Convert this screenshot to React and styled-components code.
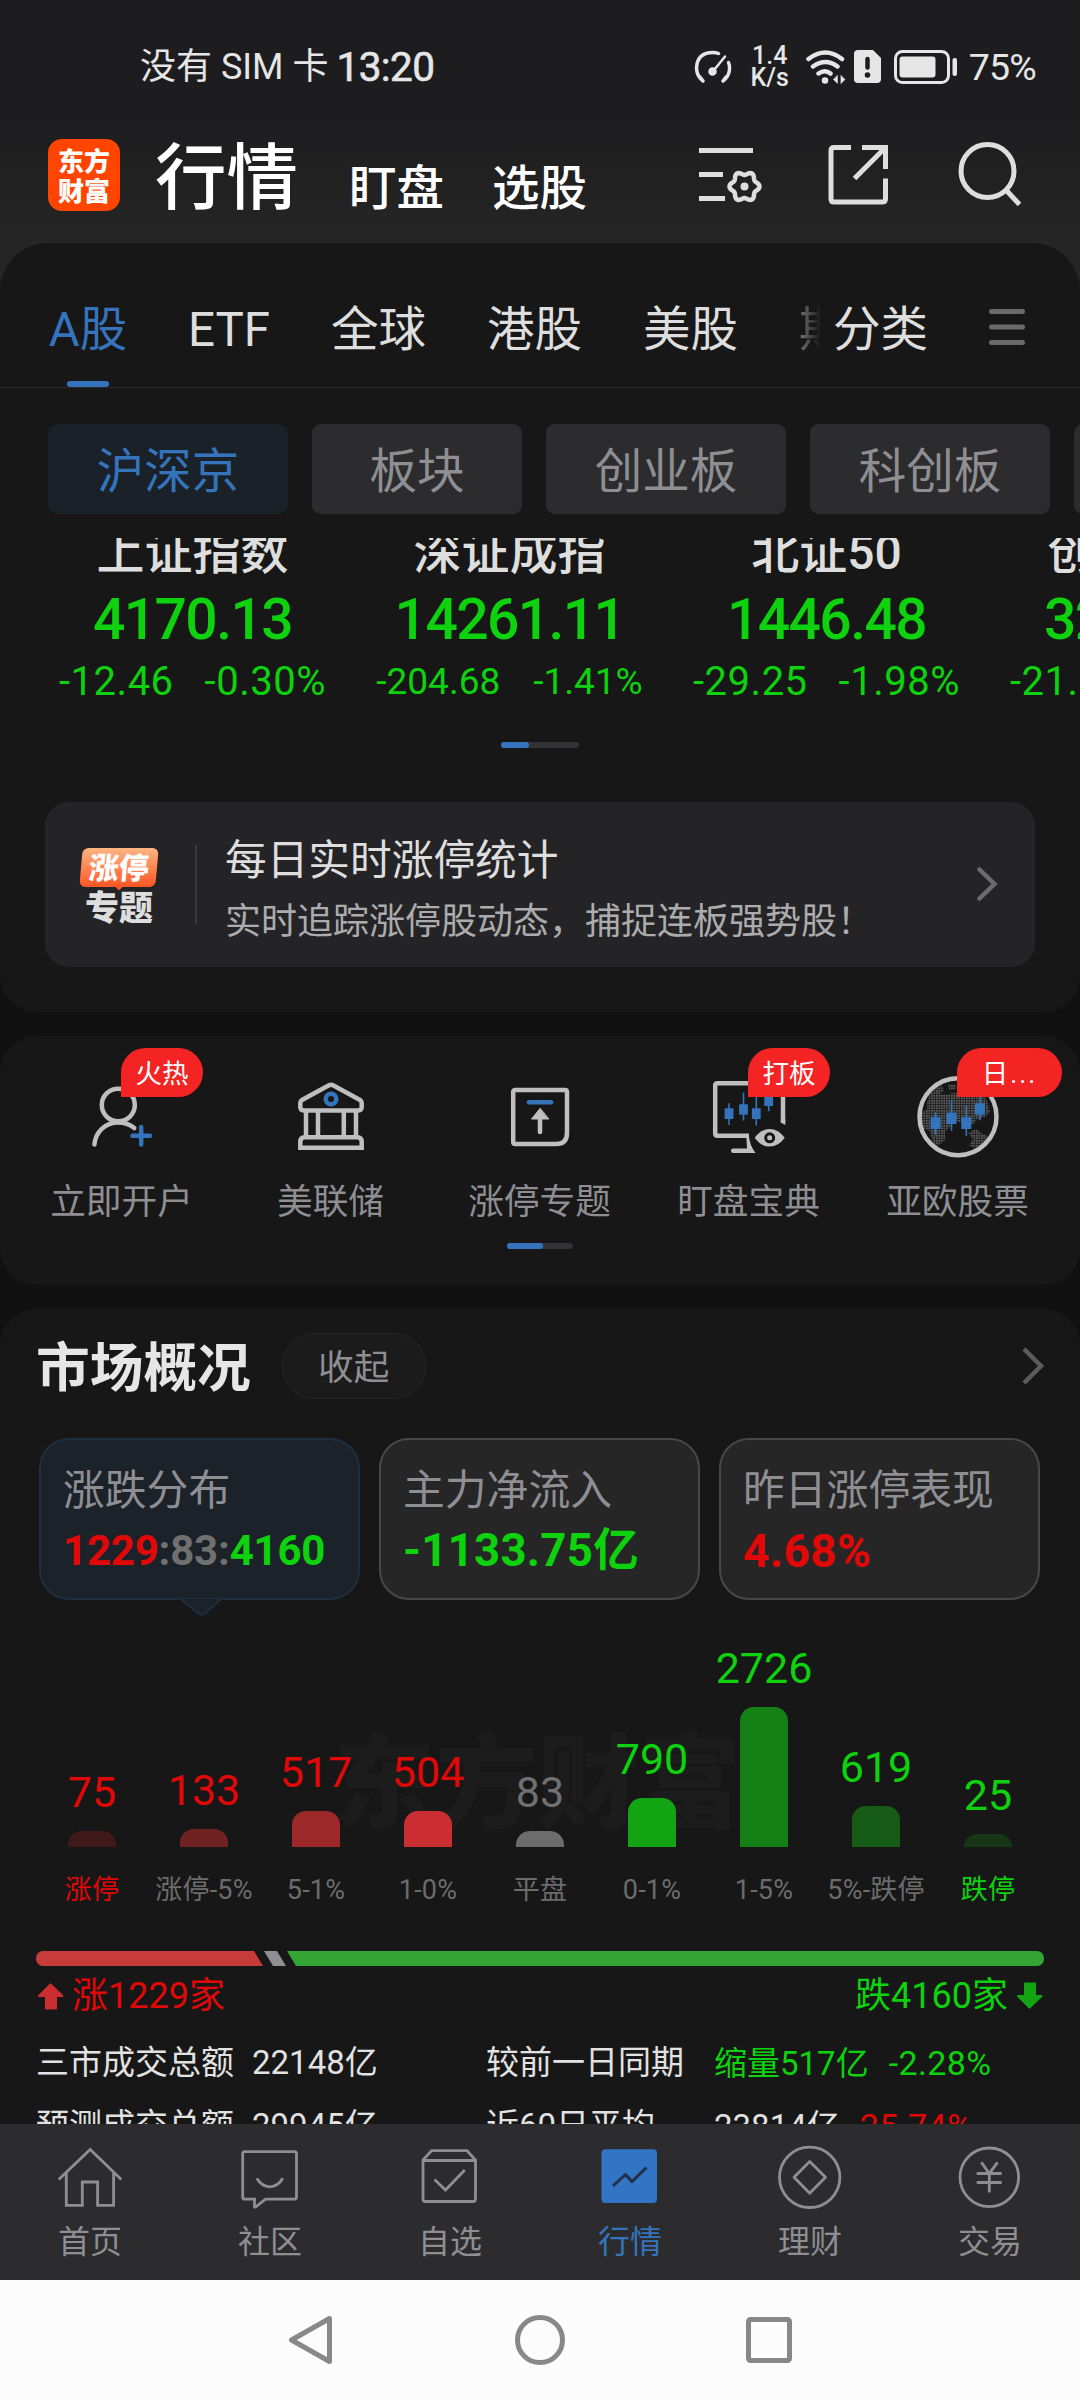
// 行情 home screen
import React from "react";
import styled, { createGlobalStyle } from "styled-components";

const BLUE = "#3574bd";
const RED = "#e20808";
const GREEN = "#0dd20d";
const GREY = "#8e8e93";
const TEXT = "#dedede";

const GlobalStyle = createGlobalStyle`
  * {
    box-sizing: border-box;
  }
  body {
    margin: 0;
    background: #111;
    font-family: Roboto, "Noto Sans CJK SC", sans-serif;
    white-space: nowrap;
  }
  svg {
    display: block;
    flex: none;
  }
`;

const Screen = styled.div`
  display: flex;
  flex-direction: column;
  width: 1080px;
  height: 2400px;
  overflow: hidden;
  color: ${TEXT};
`;

const Top = styled.div`
  height: 291px;
  margin-bottom: -48px;
  background: linear-gradient(#1d1d1f 0, #1d1d1f 110px, #252525 240px);
  flex: none;
`;

/* status bar */
const StatusBar = styled.div`
  display: flex;
  align-items: center;
  height: 134px;
  padding: 0 44px 0 140px;
  color: #e6e6e6;
  font-size: 36px;
  line-height: 40px;
`;

const Clock = styled.span`
  margin-left: 8px;
  font-size: 40.5px;
  letter-spacing: -0.6px;
  -webkit-text-stroke: 0.6px currentColor;
`;

const StatusIcons = styled.div`
  display: flex;
  align-items: center;
  margin-left: auto;
`;

const NetSpeed = styled.div`
  width: 40px;
  margin: 0 16px 0 18px;
  font-size: 25px;
  font-weight: 500;
  line-height: 22px;
  text-align: center;
`;

const Percent = styled.span`
  margin-left: 11px;
  font-size: 37.5px;
  letter-spacing: -0.8px;
`;

/* app header */
const Header = styled.header`
  display: flex;
  height: 109px;
  padding: 5px 58px 0 48px;
  color: #fff;
`;

const Logo = styled.div`
  width: 72px;
  height: 72px;
  padding: 6px 0;
  border-radius: 14px;
  background: #ff4500;
  font-family: "Noto Sans CJK SC", sans-serif;
  font-size: 26px;
  font-weight: 900;
  line-height: 30px;
  text-align: center;
`;

const Heading = styled.h1`
  margin: 4px 0 0 35px;
  font-size: 71.5px;
  font-weight: 500;
  line-height: 72px;
`;

const HeaderLink = styled.span`
  margin: 24px 0 0 ${p => p.$gap}px;
  font-size: 47.5px;
  font-weight: 500;
  line-height: 52px;
`;

const HeaderIcons = styled.div`
  display: flex;
  gap: 66px;
  margin: 3px 0 0 auto;
`;

/* panels */
const Panel = styled.section`
  flex: none;
  height: ${p => p.$height}px;
  margin-bottom: ${p => p.$gap || 0}px;
  border-radius: ${p => p.$radius || "36px"};
  background: #171717;
  overflow: hidden;
`;

const Tabs = styled.nav`
  display: flex;
  height: 145px;
  padding: 60px 54px 0 49px;
  border-bottom: 1px solid #2a2a2a;
  font-size: 47.5px;
  line-height: 54px;
`;

const Tab = styled.div`
  display: flex;
  flex-direction: column;
  align-items: center;
  width: ${p => p.$width}px;
  margin-right: ${p => p.$gap}px;
  color: ${p => (p.$active ? BLUE : TEXT)};

  &::after {
    content: "";
    width: 42px;
    height: 6px;
    margin-top: 24px;
    border-radius: 3px;
    background: ${p => (p.$active ? BLUE : "transparent")};
  }
`;

const FadedTab = styled.div`
  width: 24px;
  height: 54px;
  margin-right: 12px;
  overflow: hidden;
  color: #777;
  mask-image: linear-gradient(90deg, #000, transparent);
`;

const Pills = styled.div`
  display: flex;
  gap: 24px;
  padding: 36px 0 24px 48px;
`;

const Pill = styled.div`
  flex: none;
  width: ${p => (p.$short ? 210 : 240)}px;
  height: 90px;
  border-radius: 9px;
  background: ${p => (p.$active ? "#1a2129" : "#2c2c2e")};
  color: ${p => (p.$active ? BLUE : GREY)};
  font-size: 47.5px;
  line-height: 97px;
  text-align: center;
`;

/* index quotes, scrolled a little under the pills */
const Quotes = styled.div`
  display: flex;
  height: 172px;
  padding-left: 34px;
  overflow: hidden;
`;

const Quote = styled.div`
  flex: none;
  width: 317px;
  margin-top: -10px;
  text-align: center;
  color: ${GREEN};
`;

const QuoteName = styled.div`
  color: ${TEXT};
  font-size: 48px;
  font-weight: 500;
  line-height: 50px;
`;

const QuotePrice = styled.div`
  margin-top: 12px;
  font-size: 57px;
  font-weight: 500;
  letter-spacing: -1.6px;
  line-height: 60px;
`;

const QuoteChange = styled.div`
  display: flex;
  justify-content: center;
  gap: ${p => (p.$small ? 33 : 31)}px;
  margin-top: 12px;
  font-size: ${p => (p.$small ? 37 : 40)}px;
  letter-spacing: ${p => (p.$small ? 0 : 0.5)}px;
  line-height: 40px;
`;

const Pager = styled.div`
  width: ${p => p.$width}px;
  height: 6px;
  margin: ${p => p.$top}px auto 0;
  border-radius: 3px;
  background: #333335;

  &::before {
    content: "";
    display: block;
    width: ${p => p.$thumb}px;
    height: 6px;
    border-radius: 3px;
    background: ${BLUE};
  }
`;

const Banner = styled.div`
  display: flex;
  align-items: center;
  height: 165px;
  margin: 54px 45px 0;
  padding: 0 37px 0 34px;
  border-radius: 24px;
  background: #242426;
`;

const BannerIcon = styled.div`
  width: 80px;
  font-family: "Noto Sans CJK SC", sans-serif;
  font-weight: 900;
  text-align: center;
`;

const BannerTag = styled.div`
  width: 76px;
  height: 39px;
  margin: 0 auto;
  border-radius: 6px;
  background: linear-gradient(#ffb583, #ff5524);
  color: #fff;
  font-size: 30px;
  line-height: 37px;
  transform: skewX(-5deg);
`;

/* small pointer under the orange tag */
const BannerTip = styled.div`
  width: 8px;
  height: 4px;
  margin: 0 auto;
  background: #ff5524;
  clip-path: polygon(0 0, 100% 0, 50% 100%);
`;

const BannerWord = styled.div`
  margin-top: -1px;
  font-size: 34px;
  line-height: 32px;
`;

const Divider = styled.div`
  width: 2px;
  height: 79px;
  margin: 0 28px 0 36px;
  background: #39393b;
`;

const BannerText = styled.div`
  flex: 1;
  padding-top: 16px;
  font-size: 41.7px;
  line-height: 58px;
`;

const BannerSub = styled.div`
  color: #acacae;
  font-size: 36px;
  line-height: 64px;
`;

/* shortcuts */
const Shortcuts = styled.div`
  display: grid;
  grid-template-columns: repeat(5, 209px);
  padding: 39px 0 0 17px;
`;

const Shortcut = styled.div`
  position: relative;
  display: flex;
  flex-direction: column;
  align-items: center;
  color: ${GREY};
  font-size: 35.7px;
  line-height: 40px;

  svg {
    margin-bottom: 23px;
  }
`;

const Badge = styled.div`
  position: absolute;
  top: -27px;
  left: 104px;
  width: ${p => (p.$wide ? 105 : 82)}px;
  height: 49px;
  border-radius: 25px 25px 25px 0;
  background: #f42424;
  color: #fff;
  font-size: 26.5px;
  line-height: 51px;
  text-align: center;
  letter-spacing: ${p => (p.$wide ? 2 : 0)}px;
`;

/* market overview */
const OverviewHead = styled.div`
  display: flex;
  align-items: center;
  height: 66px;
  margin: 24px 35px 39px 36px;
`;

const OverviewTitle = styled.h2`
  margin: 0 31px 0 0;
  color: #e6e6e6;
  font-size: 53.7px;
  font-weight: 700;
  line-height: 72px;
  padding-top: 5px;
`;

const Collapse = styled.div`
  width: 144px;
  height: 66px;
  margin-right: auto;
  border: 1px solid #252525;
  border-radius: 32px;
  background: #1b1b1b;
  color: ${GREY};
  font-size: 35.7px;
  line-height: 69px;
  text-align: center;
`;

const Cards = styled.div`
  display: grid;
  grid-template-columns: repeat(3, 321px);
  gap: 19px;
  padding-left: 39px;
`;

const Card = styled.div`
  position: relative;
  height: 162px;
  padding: 26px 0 0 22px;
  border: 2px solid ${p => (p.$active ? "#1f2f42" : "#484848")};
  border-radius: 30px;
  background: ${p => (p.$active ? "#1b222a" : "#262626")};
  color: ${GREY};
  font-size: 41.8px;
  line-height: 50px;

  svg {
    position: absolute;
    left: 139px;
    top: 158px;
  }
`;

const CardValue = styled.div`
  margin-top: 8px;
  color: ${p => p.color};
  font-size: ${p => p.$size}px;
  font-weight: 700;
  letter-spacing: ${p => p.$spacing}px;
  line-height: 54px;
`;

const Colored = styled.span`
  color: ${p => p.color};
`;

const Chart = styled.div`
  position: relative;
  display: grid;
  grid-template-columns: repeat(9, 112px);
  align-items: end;
  height: 310px;
  padding-left: 36px;
`;

const Watermark = styled.div`
  position: absolute;
  left: 333px;
  top: 125px;
  color: #1c1c1c;
  font-size: 102px;
  font-weight: 900;
  line-height: 120px;
`;

const Column = styled.div`
  position: relative;
  display: flex;
  flex-direction: column;
  align-items: center;
`;

const Count = styled.div`
  color: ${p => p.color};
  font-size: 43px;
  line-height: 44px;
`;

const Bar = styled.div`
  width: 48px;
  margin: 17px 0 23px;
  border-radius: 14px 14px 0 0;
  background: ${p => p.color};
`;

const Bucket = styled.div`
  color: ${p => p.color};
  font-size: 27px;
  letter-spacing: 0.2px;
  line-height: 40px;
`;

const Ratio = styled.div`
  display: flex;
  gap: 1px;
  height: 15px;
  margin: 41px 36px 0;
  border-radius: 7px;
  overflow: hidden;
`;

const RatioPart = styled.div`
  flex: ${p => (p.$width ? `none` : 1)};
  width: ${p => p.$width}px;
  background: ${p => p.color};
  clip-path: ${p =>
    p.$side === "left"
      ? "polygon(0 0, calc(100% - 9px) 0, 100% 100%, 0 100%)"
      : p.$side === "right"
      ? "polygon(0 0, 100% 0, 100% 100%, 9px 100%)"
      : "polygon(0 0, calc(100% - 9px) 0, 100% 100%, 9px 100%)"};
`;

const RatioLabels = styled.div`
  display: flex;
  justify-content: space-between;
  margin: 10px 37px 0;
  font-size: 36px;
  line-height: 40px;
`;

const RatioLabel = styled.div`
  display: flex;
  align-items: center;
  gap: 8px;
  color: ${p => p.color};
`;

const Totals = styled.div`
  display: grid;
  grid-template-columns: 216px 234px 228px 1fr;
  margin: 16px 0 0 36px;
  color: #e2e2e2;
  font-size: 33px;
  line-height: 62px;
`;

const Gap = styled.span`
  margin-left: 20px;
  font-size: 34px;
  letter-spacing: 0.4px;
`;

/* bottom bars */
const TabBar = styled.nav`
  flex: none;
  display: grid;
  grid-template-columns: repeat(6, 180px);
  height: 156px;
  padding-top: 21px;
  background: #2c2c2e;
`;

const TabItem = styled.div`
  display: flex;
  flex-direction: column;
  align-items: center;
  color: ${p => (p.$active ? BLUE : GREY)};
  font-size: 32px;
  line-height: 40px;

  svg {
    margin-bottom: 13px;
  }
`;

const SystemNav = styled.div`
  flex: none;
  display: flex;
  justify-content: center;
  align-items: center;
  gap: 179px;
  height: 120px;
  background: #fcfcfc;
`;

const Icon = ({ w, h = w, sw = 5, color = "currentColor", children, ...rest }) => (
  <svg
    width={w}
    height={h}
    viewBox={`0 0 ${w} ${h}`}
    fill="none"
    stroke={color}
    strokeWidth={sw}
    {...rest}
  >
    {children}
  </svg>
);

// six soft lobes around a centre
const gearPoints = (cx, cy) =>
  Array.from({ length: 72 }, (_, i) => {
    const a = (i / 72) * Math.PI * 2;
    const r = 13.3 + 1.7 * Math.cos(6 * a);
    return `${(cx + r * Math.cos(a)).toFixed(2)},${(cy + r * Math.sin(a)).toFixed(2)}`;
  }).join(" ");

// x, body top, body bottom, wick top, wick bottom
const Candles = ({ data, width }) =>
  data.map(([x, top, bottom, high, low]) => (
    <g key={x} fill={BLUE} stroke="none">
      <rect x={x - width / 2} y={top} width={width} height={bottom - top} />
      <rect x={x - 0.8} y={high} width="1.6" height={low - high} />
    </g>
  ));

const ICON_GREY = "#bfbfbf";

const AccountIcon = () => (
  <Icon w={84} sw={4.5} color={ICON_GREY} strokeLinecap="round">
    <ellipse cx="38.3" cy="30" rx="16.5" ry="16.3" />
    <path d="M14.4 69.5C15.5 57 25 47.5 38.3 47.5c6 0 11.5 2 16 5.5" />
    <path d="M52.5 60.7h17.4M61.2 52v17.4" stroke={BLUE} />
  </Icon>
);

const BankIcon = () => (
  <Icon w={84} sw={4.5} color={ICON_GREY}>
    <path d="M39.5 10.5q2.5-1.3 5 0L71 25q1.7 1 1.7 3v4q0 3.4-3.5 3.4H14.800q-3.5 0-3.5-3.4v-4q0-2 1.7-3z" />
    <path d="M17 36v26M29 36v26M54.8 36v26M67 36v26" />
    <path d="M11.3 72.8v-6q0-4.5 4.5-4.5h52.4q4.500 0 4.5 4.5v6z" />
    <circle cx="42" cy="24" r="5.3" stroke={BLUE} />
  </Icon>
);

const LimitUpIcon = () => (
  <Icon w={84} sw={4.5} color={ICON_GREY} strokeLinecap="round">
    <path d="M17.5 15h49.5q2 0 2 2v41q0 11-11 11H17.5q-2.3 0-2.3-2.3V17.3q0-2.3 2.3-2.3z" />
    <path d="M31 27.3h22" stroke={BLUE} />
    <path d="M42 37v20" />
    <path d="M42 33.500l-8.5 10.500h17z" fill={ICON_GREY} stroke={ICON_GREY} strokeWidth="1" />
  </Icon>
);

const MonitorIcon = () => (
  <Icon w={84} sw={4.5} color={ICON_GREY}>
    <path d="M76 47.5V10.5q0-2.3-2.3-2.3H10.5q-2.3 0-2.3 2.3v48q0 2.3 2.3 2.3h31.5" />
    <path
      d="M39.3 61h2.7q.5 9 6.5 17H26q-2 0-2-2.3t2-2.3h14z"
      fill={ICON_GREY}
      stroke="none"
    />
    <path d="M73.8 44v3.5l4.5 2.5v-6z" fill={ICON_GREY} stroke="none" />
    <Candles
      width={8.8}
      data={[
        [22, 33.3, 44, 28.3, 50],
        [36.5, 29.3, 39.7, 17.7, 45.7],
        [49.3, 33.3, 44, 20, 50.7],
        [61.7, 20, 31, 15, 36.3]
      ]}
    />
    <path
      d="M47.7 62.8Q54 54 62.7 54T77.7 62.8Q71.5 71.6 62.7 71.6T47.7 62.8z"
      fill={ICON_GREY}
      stroke="none"
    />
    <circle cx="62.7" cy="62.8" r="4" stroke="#171717" strokeWidth="3" />
  </Icon>
);

const GlobeIcon = () => (
  <Icon w={84} sw={4.5} color={ICON_GREY}>
    <defs>
      <pattern id="dots" width="2.5" height="2.5" patternUnits="userSpaceOnUse">
        <rect width="1.8" height="1.8" fill="#5c5c5c" stroke="none" />
      </pattern>
    </defs>
    <path
      d="M14 19l6-5 5-4 3 5-4 4 8 0 12-2 14 2 12 4 4 14-5 5-8 2-4 6-5-4-5 3-8-4-6 8-4 4v8l-7 6-5-3-3-12-9-3-1-14 7-5 0-6zM32 9l8 1 0 5-7 0zM52 58l8-4 5 4 8 4-7 8-8 3-5-3 4-6z"
      fill="url(#dots)"
      stroke="none"
    />
    <Candles
      width={10}
      data={[
        [19.6, 42.3, 54, 37.3, 59.7],
        [35.5, 37.7, 49, 25.3, 55.7],
        [50.3, 42.3, 54, 30.3, 61.3],
        [64, 28.3, 39.7, 22, 45.3]
      ]}
    />
    <circle cx="42" cy="41.7" r="38.5" />
  </Icon>
);

const quotes = [
  ["上证指数", "4170.13", "-12.46", "-0.30%"],
  ["深证成指", "14261.11", "-204.68", "-1.41%"],
  ["北证50", "1446.48", "-29.25", "-1.98%"],
  ["创业板指", "3287.20", "-21.96", "-0.66%"]
];

const shortcuts = [
  { label: "立即开户", icon: AccountIcon, badge: "火热" },
  { label: "美联储", icon: BankIcon },
  { label: "涨停专题", icon: LimitUpIcon },
  { label: "盯盘宝典", icon: MonitorIcon, badge: "打板" },
  { label: "亚欧股票", icon: GlobeIcon, badge: "日...", wide: true }
];

const DIM = "#6c6c6c";

const buckets = [
  { label: "涨停", count: 75, height: 16, bar: "#401a1b", color: RED, strong: true },
  { label: "涨停-5%", count: 133, height: 18, bar: "#702223", color: RED },
  { label: "5-1%", count: 517, height: 36, bar: "#9c2829", color: RED },
  { label: "1-0%", count: 504, height: 36, bar: "#ca2e30", color: RED },
  { label: "平盘", count: 83, height: 16, bar: DIM, color: "#707070" },
  { label: "0-1%", count: 790, height: 49, bar: "#13a413", color: GREEN },
  { label: "1-5%", count: 2726, height: 140, bar: "#158015", color: GREEN },
  { label: "5%-跌停", count: 619, height: 41, bar: "#165c17", color: GREEN },
  { label: "跌停", count: 25, height: 13, bar: "#173616", color: GREEN, strong: true }
];

const tabItems = [
  {
    label: "首页",
    icon: (
      <>
        <path d="M.8 34.5L32.2 4.5 63.3 34.5" />
        <path d="M8.3 28v32.3H24.3V37h15.3v23.3h16V28" />
      </>
    )
  },
  {
    label: "社区",
    icon: (
      <>
        <path d="M6.5 6.7h50q2 0 2 2v43q0 2.5-2.5 2.5H27.5L17.5 62q-1 .5-1-.5v-7.3H7q-2.3 0-2.3-2.5V8.7q0-2 1.8-2z" />
        <path d="M18.8 33.3q5 8.5 13 8.5t13-8.5" />
      </>
    )
  },
  {
    label: "自选",
    icon: (
      <>
        <path d="M5 15L13.5 5.7h35.5L57.5 15v39q0 2.5-2.5 2.5H7.5Q5 56.5 5 54zM5 15.5h52.5" />
        <path d="M16.5 34.5L27.5 45 46.8 25" />
      </>
    )
  },
  {
    label: "行情",
    active: true,
    icon: (
      <>
        <rect x="3.5" y="4.3" width="55.5" height="53.7" rx="4" fill="#3275c4" stroke="none" />
        <path d="M15 41L27.5 29.5 34 36.5 48.5 22.5" stroke="#1f3149" strokeWidth="3" />
      </>
    )
  },
  {
    label: "理财",
    icon: (
      <>
        <circle cx="31.7" cy="32.3" r="30.2" />
        <path d="M31.7 16.5L47.5 32.3 31.7 48.3 16 32.3z" strokeLinejoin="round" />
      </>
    )
  },
  {
    label: "交易",
    icon: (
      <>
        <circle cx="31.3" cy="32.3" r="29.3" />
        <path d="M23.3 17.3L31.3 28.5 39.5 17.3M18.7 28.5h25M18.7 37.5h25M31.3 28.5v19" />
      </>
    )
  }
];

const StatusBarView = () => (
  <StatusBar>
    没有 SIM 卡<Clock>13:20</Clock>
    <StatusIcons>
      <Icon w={38} h={36} sw={3.5} strokeLinecap="round">
        <path d="M9 32q-6.5-5-6.5-13.5Q3.5 3.5 19 3.5q3 0 5.5 1M34.5 13.5q1.5 3 1 7-.5 7-6.5 11.5M6 28l3 4M32 28l-3 4" />
        <path d="M18.5 23L31 7.500" strokeWidth="2.5" />
        <circle cx="18.5" cy="22.5" r="2.5" fill="currentColor" />
      </Icon>
      <NetSpeed>
        1.4
        <br />
        K/s
      </NetSpeed>
      <Icon w={40} h={36} sw={4.5} strokeLinecap="round">
        <path d="M2.5 10Q19.5-3 36 10M7 17.5q12.5-9 24.5 0M12.5 24.500q6.5-4.5 12 0" />
        <circle cx="19" cy="31.500" r="2.5" fill="currentColor" strokeWidth="1.5" />
        <path d="M31.500 26.500v8l-4-4zM35 26.500l4 4-4 4z" fill="currentColor" strokeWidth=".5" />
      </Icon>
      <Icon w={27} h={34} sw={0} style={{ marginLeft: 8 }}>
        <path d="M4 0h15l8 8v21q0 4-4 4H4q-4 0-4-4V4q0-4 4-4z" fill="currentColor" />
        <path d="M13.5 9v8.500" stroke="#1d1d1f" strokeWidth="4.5" strokeLinecap="round" />
        <circle cx="13.5" cy="25" r="2.8" fill="#1d1d1f" />
      </Icon>
      <Icon w={64} h={34} sw={3} style={{ marginLeft: 13 }}>
        <rect x="1.5" y="1.5" width="53" height="31" rx="7" />
        <rect x="5.5" y="6.5" width="36" height="21" rx="3" fill="currentColor" stroke="none" />
        <rect x="58.5" y="8" width="4.5" height="18" rx="2" fill="currentColor" stroke="none" />
      </Icon>
      <Percent>75%</Percent>
    </StatusIcons>
  </StatusBar>
);

const HeaderView = () => (
  <Header>
    <Logo>
      东方
      <br />
      财富
    </Logo>
    <Heading>行情</Heading>
    <HeaderLink $gap={51}>盯盘</HeaderLink>
    <HeaderLink $gap={48}>选股</HeaderLink>
    <HeaderIcons>
      <Icon w={64} color={TEXT}>
        <path d="M1 8.500h54M1 32.5h24M1 56.500h26" />
        <polygon points={gearPoints(46.5, 44.5)} strokeWidth="4.5" />
        <circle cx="46.5" cy="44.5" r="4" fill={TEXT} stroke="none" />
      </Icon>
      <Icon w={64} color={TEXT}>
        <path d="M23 5.500H6Q3 5.500 3 8.500V57q0 3 3 3h48q3.500 0 3.500-3V36.500M34 5.500h23.500V27M57 6L26.500 36.500" />
      </Icon>
      <Icon w={64} color={TEXT}>
        <circle cx="29.5" cy="29" r="26.5" />
        <path d="M48 48L61.5 62.500" />
      </Icon>
    </HeaderIcons>
  </Header>
);

const Overview = () => (
  <Panel $height={815} $radius="36px 36px 0 0">
    <OverviewHead>
      <OverviewTitle>市场概况</OverviewTitle>
      <Collapse>收起</Collapse>
      <Icon w={24} h={38} sw={4.5} color="#5c5c5c">
        <path d="M3 2L20 19 3 36" />
      </Icon>
    </OverviewHead>
    <Cards>
      <Card $active>
        涨跌分布
        <CardValue $size={42} $spacing={-0.2}>
          <Colored color={RED}>1229</Colored>
          <Colored color="#707070">:83:</Colored>
          <Colored color={GREEN}>4160</Colored>
        </CardValue>
        <Icon w={44} h={20} sw={2} color="#1f2f42">
          <path d="M1 1L18 15.5q3.5 2 7 0L41 1" fill="#1b222a" />
        </Icon>
      </Card>
      <Card>
        主力净流入
        <CardValue color={GREEN} $size={45.5} $spacing={0.3}>
          -1133.75亿
        </CardValue>
      </Card>
      <Card>
        昨日涨停表现
        <CardValue color={RED} $size={46} $spacing={0.4}>
          4.68%
        </CardValue>
      </Card>
    </Cards>
    <Chart>
      <Watermark>东方财富</Watermark>
      {buckets.map(b => (
        <Column key={b.label}>
          <Count color={b.color}>{b.count}</Count>
          <Bar color={b.bar} style={{ height: b.height }} />
          <Bucket color={b.strong ? b.color : DIM}>{b.label}</Bucket>
        </Column>
      ))}
    </Chart>
    <Ratio>
      <RatioPart $side="left" $width={227} color="#c93a3a" />
      <RatioPart $width={22} color={GREY} />
      <RatioPart $side="right" color="#34a434" />
    </Ratio>
    <RatioLabels>
      <RatioLabel color={RED}>
        <Icon w={27} h={28} sw={1} color="#ca2e30">
          <path d="M13.5 1.5L26 13.5v1h-6.5V27h-11V14.5H1.5v-1z" fill="#ca2e30" />
        </Icon>
        涨1229家
      </RatioLabel>
      <RatioLabel color={GREEN}>
        跌4160家
        <Icon w={27} h={28} sw={1} color="#13a413">
          <path d="M13.5 26.5L26 14.5v-1h-6.5V1h-11v12.5H1.5v1z" fill="#13a413" />
        </Icon>
      </RatioLabel>
    </RatioLabels>
    <Totals>
      <span>三市成交总额</span>
      <span>22148亿</span>
      <span>较前一日同期</span>
      <Colored color={GREEN}>
        缩量517亿<Gap>-2.28%</Gap>
      </Colored>
      <span>预测成交总额</span>
      <span>29945亿</span>
      <span>近60日平均</span>
      <span>
        23814亿
        <Gap>
          <Colored color={RED}>25.74%</Colored>
        </Gap>
      </span>
    </Totals>
  </Panel>
);

export default function App() {
  return (
    <Screen>
      <GlobalStyle />
      <Top>
        <StatusBarView />
        <HeaderView />
      </Top>

      <Panel $height={769} $gap={24} $radius="48px 48px 36px 36px">
        <Tabs>
          <Tab $active $width={78} $gap={61}>A股</Tab>
          <Tab $width={82} $gap={61}>ETF</Tab>
          <Tab $width={95} $gap={61}>全球</Tab>
          <Tab $width={95} $gap={61}>港股</Tab>
          <Tab $width={95} $gap={61}>美股</Tab>
          <FadedTab>期货</FadedTab>
          <Tab $width={95} $gap={60}>分类</Tab>
          <Icon w={38} h={54} color="#6a6a6a" strokeLinecap="round">
            <path d="M3.500 8.5h31M3.500 24h31M3.500 39.500h31" />
          </Icon>
        </Tabs>
        <Pills>
          <Pill $active>沪深京</Pill>
          <Pill $short>板块</Pill>
          <Pill>创业板</Pill>
          <Pill>科创板</Pill>
          <Pill />
        </Pills>
        <Quotes>
          {quotes.map(([name, price, change, pct]) => (
            <Quote key={name}>
              <QuoteName>{name}</QuoteName>
              <QuotePrice>{price}</QuotePrice>
              <QuoteChange $small={change.length > 6}>
                <span>{change}</span>
                <span>{pct}</span>
              </QuoteChange>
            </Quote>
          ))}
        </Quotes>
        <Pager $width={78} $thumb={28} $top={32} />
        <Banner>
          <BannerIcon>
            <BannerTag>涨停</BannerTag>
            <BannerTip />
            <BannerWord>专题</BannerWord>
          </BannerIcon>
          <Divider />
          <BannerText>
            每日实时涨停统计
            <BannerSub>实时追踪涨停股动态，捕捉连板强势股！</BannerSub>
          </BannerText>
          <Icon w={22} h={36} sw={4.5} color="#6b6b6d" strokeLinecap="round">
            <path d="M3.5 2.500L18.5 17 3.5 31.500" />
          </Icon>
        </Banner>
      </Panel>

      <Panel $height={249} $gap={24}>
        <Shortcuts>
          {shortcuts.map(({ label, icon: ShortcutIcon, badge, wide }) => (
            <Shortcut key={label}>
              <ShortcutIcon />
              {label}
              {badge && <Badge $wide={wide}>{badge}</Badge>}
            </Shortcut>
          ))}
        </Shortcuts>
        <Pager $width={66} $thumb={36} $top={21} />
      </Panel>

      <Overview />

      <TabBar>
        {tabItems.map(({ label, icon, active }) => (
          <TabItem key={label} $active={active}>
            <Icon w={64} sw={2.8}>{icon}</Icon>
            {label}
          </TabItem>
        ))}
      </TabBar>
      <SystemNav>
        <Icon w={50} color="#888" strokeLinejoin="round">
          <path d="M43.5 3.5v43L5.5 25z" />
        </Icon>
        <Icon w={50} color="#888">
          <circle cx="25" cy="25" r="22.5" />
        </Icon>
        <Icon w={50} color="#888">
          <rect x="4.5" y="4.5" width="41" height="41" rx="2" />
        </Icon>
      </SystemNav>
    </Screen>
  );
}
